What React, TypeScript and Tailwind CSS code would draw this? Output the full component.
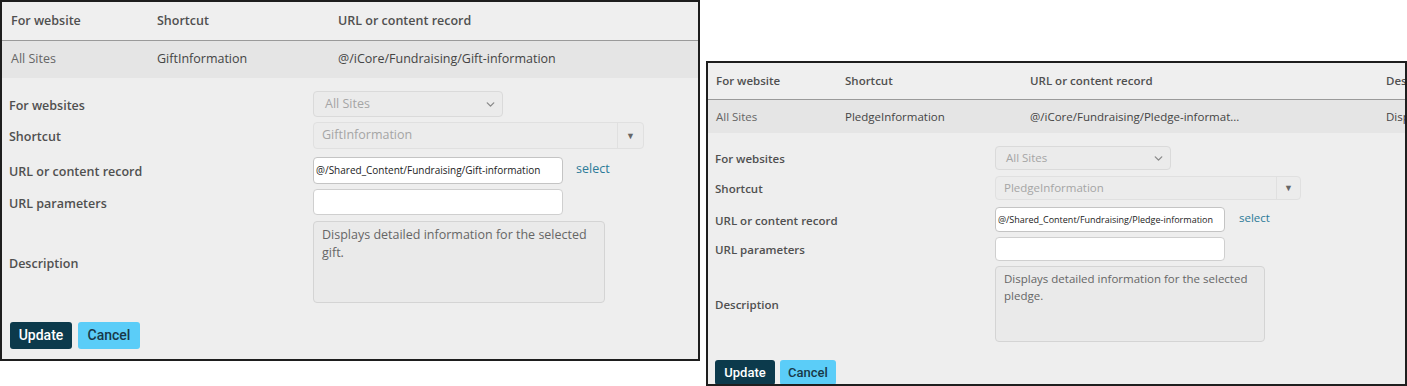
import React from "react";
import { ChevronDown } from "lucide-react";

type Variant = {
  panel: string;
  head: string;
  row: string;
  cols: string[];
  form: string;
  label: string;
  select: string;
  combo: string;
  comboArrow: string;
  url: string;
  params: string;
  area: string;
  link: string;
  r2: string;
  r3: string;
  r4: string;
  r5: string;
  buttons: string;
  update: string;
  cancel: string;
};

const big: Variant = {
  panel: "w-[700px] h-[361px] text-[12.5px]",
  head: "h-[39px] pl-[9px]",
  row: "h-[37px] pl-[9px]",
  cols: ["w-[146px]", "w-[181px]", "w-[360px]"],
  form: "pt-[13px] pl-[7px]",
  label: "w-[304px] pt-[4px]",
  select: "w-[190px] h-[26px] pl-[11px] pr-[5px]",
  combo: "w-[331px] h-[27px] pl-[8px]",
  comboArrow: "w-[26px]",
  url: "w-[250px] h-[27px] text-[10px] pl-[2px]",
  params: "w-[250px] h-[26px]",
  area: "w-[292px] h-[82px] px-[8px] py-[4px] leading-[18px]",
  link: "ml-[13px] -mt-[2px]",
  r2: "mt-[5px]",
  r3: "mt-[8px]",
  r4: "mt-[5px]",
  r5: "mt-[6px]",
  buttons: "mt-[19px] pl-[1px] gap-[6px]",
  update: "w-[62px] h-[27px] text-[14px]",
  cancel: "w-[62px] h-[27px] text-[14px]",
};

const small: Variant = {
  panel: "w-[701px] h-[325px] text-[11.5px]",
  head: "h-[37px] pl-[8px]",
  row: "h-[33px] pl-[8px]",
  cols: ["w-[129px]", "w-[185px]", "w-[356px]", "w-[200px]"],
  form: "pt-[13px] pl-[7px]",
  label: "w-[280px] pt-[2px]",
  select: "w-[176px] h-[24px] pl-[10px] pr-[5px]",
  combo: "w-[306px] h-[24px] pl-[8px]",
  comboArrow: "w-[24px]",
  url: "w-[230px] h-[25px] text-[9px] pl-[2px]",
  params: "w-[230px] h-[24px]",
  area: "w-[270px] h-[76px] px-[8px] py-[3px] leading-[17px]",
  link: "ml-[14px] -mt-[3px]",
  r2: "mt-[6px]",
  r3: "mt-[7px]",
  r4: "mt-[5px]",
  r5: "mt-[5px]",
  buttons: "mt-[18px] pl-[0px] gap-[5px]",
  update: "w-[60px] h-[25px] text-[13px]",
  cancel: "w-[56px] h-[25px] text-[13px]",
};

type Record = {
  cells: string[];
  heads: string[];
  shortcut: string;
  url: string;
  descLines: string[];
};

function Panel({ v, rec }: { v: Variant; rec: Record }) {
  return (
    <div
      className={`${v.panel} shrink-0 overflow-hidden border-2 border-[#1e1e1e] bg-[#eeeeee] flex flex-col`}
      style={{ fontFamily: '"Open Sans", "Noto Sans", sans-serif' }}
    >
      <div className={`${v.head} flex items-center bg-[#efefef] border-b border-[#9a9a9a] font-semibold text-[#505050] whitespace-nowrap shrink-0`}>
        {rec.heads.map((h, i) => (
          <div key={h} className={`${v.cols[i]} shrink-0`}>{h}</div>
        ))}
      </div>
      <div className={`${v.row} flex items-center bg-[#e5e5e5] whitespace-nowrap shrink-0`}>
        {rec.cells.map((c, i) => (
          <div key={i} className={`${v.cols[i]} shrink-0 ${i === 0 ? "text-[#666666]" : "text-[#444444]"}`}>{c}</div>
        ))}
      </div>

      <div className={`${v.form} flex flex-col text-[#505050]`}>
        <div className="flex items-center">
          <div className={`${v.label} font-semibold`}>For websites</div>
          <div className={`${v.select} flex items-center justify-between rounded-[4px] border border-[#dadada] bg-[#ebebeb] text-[#a5a5a5]`}>
            <span>All Sites</span>
            <ChevronDown size={13} strokeWidth={2.5} className="text-[#8a8a8a]" />
          </div>
        </div>

        <div className={`${v.r2} flex items-center`}>
          <div className={`${v.label} font-semibold`}>Shortcut</div>
          <div className={`${v.combo} flex items-center rounded-[4px] border border-[#e0e0e0] bg-[#ececec] text-[#a5a5a5]`}>
            <span className="flex-1">{rec.shortcut}</span>
            <div className={`${v.comboArrow} h-full flex items-center justify-center border-l border-[#e0e0e0] text-[#666666] text-[9px]`}>▼</div>
          </div>
        </div>

        <div className={`${v.r3} flex items-center`}>
          <div className={`${v.label} font-semibold`}>URL or content record</div>
          <div className={`${v.url} flex items-center rounded-[4px] border border-[#c4c4c4] bg-white text-[#222222] whitespace-nowrap overflow-hidden`}>
            {rec.url}
          </div>
          <span className={`${v.link} text-[#2b7a98]`}>select</span>
        </div>

        <div className={`${v.r4} flex items-center`}>
          <div className={`${v.label} font-semibold`}>URL parameters</div>
          <div className={`${v.params} rounded-[4px] border border-[#cfcfcf] bg-white`} />
        </div>

        <div className={`${v.r5} flex items-center`}>
          <div className={`${v.label} font-semibold`}>Description</div>
          <div className={`${v.area} rounded-[4px] border border-[#d4d4d4] bg-[#eaeaea] text-[#666666] whitespace-nowrap`}>
            {rec.descLines.map((l) => (
              <div key={l}>{l}</div>
            ))}
          </div>
        </div>

        <div className={`${v.buttons} flex`} style={{ fontFamily: "Roboto, Arial, sans-serif" }}>
          <button className={`${v.update} rounded-[3px] bg-[#0c3a4c] text-white font-medium`}>Update</button>
          <button className={`${v.cancel} rounded-[3px] bg-[#5bcdf8] text-[#183949] font-medium`}>Cancel</button>
        </div>
      </div>
    </div>
  );
}

export default function App() {
  return (
    <div className="w-[1407px] h-[386px] bg-white flex items-start gap-[6px] overflow-hidden">
      <Panel
        v={big}
        rec={{
          heads: ["For website", "Shortcut", "URL or content record"],
          cells: ["All Sites", "GiftInformation", "@/iCore/Fundraising/Gift-information"],
          shortcut: "GiftInformation",
          url: "@/Shared_Content/Fundraising/Gift-information",
          descLines: ["Displays detailed information for the selected", "gift."],
        }}
      />
      <div className="mt-[61px]">
        <Panel
          v={small}
          rec={{
            heads: ["For website", "Shortcut", "URL or content record", "Description"],
            cells: ["All Sites", "PledgeInformation", "@/iCore/Fundraising/Pledge-informat...", "Displays detailed information"],
            shortcut: "PledgeInformation",
            url: "@/Shared_Content/Fundraising/Pledge-information",
            descLines: ["Displays detailed information for the selected", "pledge."],
          }}
        />
      </div>
    </div>
  );
}
